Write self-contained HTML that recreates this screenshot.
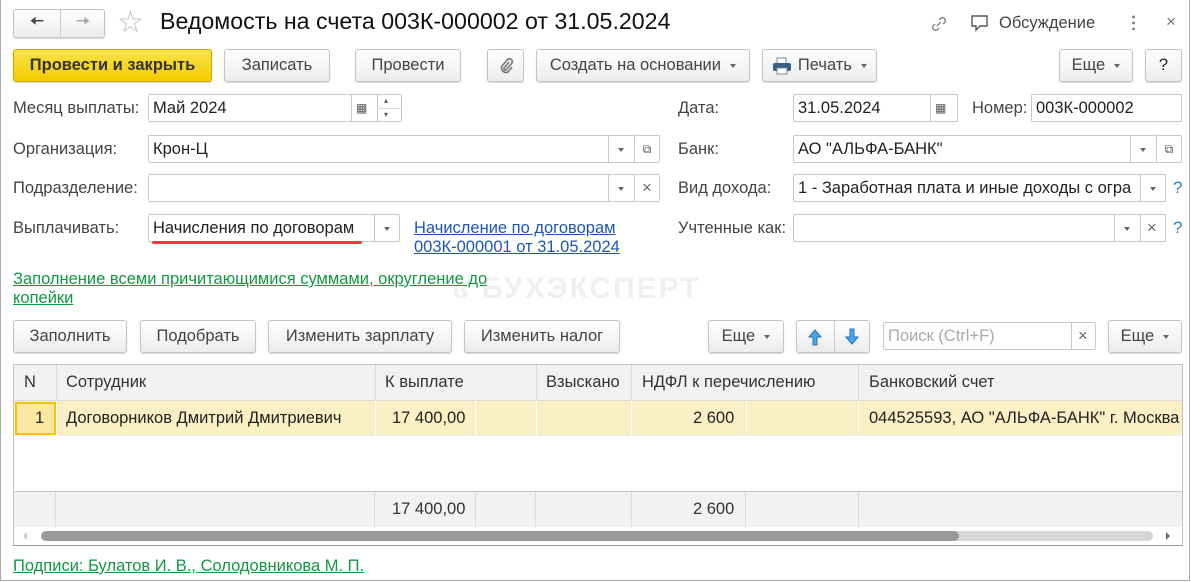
<!DOCTYPE html><html><head><meta charset="utf-8"><style>
*{box-sizing:border-box}body{margin:0;width:1191px;height:582px;background:#fff;font-family:"Liberation Sans",sans-serif;font-size:16.5px;color:#333;position:relative;overflow:hidden}
.a{position:absolute}
.win{left:0;top:0;width:1190px;height:581px;border:1px solid #aaa;border-top:none}
.btn{position:absolute;height:33px;border:1px solid #c4c4c4;border-radius:3px;background:linear-gradient(#fff,#ececec);box-shadow:0 1px 1px rgba(0,0,0,.15);display:flex;align-items:center;justify-content:center;color:#444;white-space:nowrap}
.inp{position:absolute;height:28px;border:1px solid #c8c8c8;border-radius:2px;background:#fff;padding-left:4px;line-height:27px;color:#222;white-space:nowrap;overflow:hidden}
.sep{position:absolute;top:0;bottom:0;border-left:1px solid #c8c8c8}
.lbl{position:absolute;color:#444}
.dd{position:absolute;width:0;height:0;border-left:3px solid transparent;border-right:3px solid transparent;border-top:4px solid #666}
.q{position:absolute;color:#2a7ec8;font-size:17px}
.lnk{position:absolute;color:#1d55b5;text-decoration:underline;z-index:2}
.g{color:#119940}
.col{position:absolute;top:0;bottom:0;border-left:1px solid #dadada}
</style></head><body>
<div class="a win"></div>
<div class="btn" style="left:13px;top:9px;width:92px;height:29px"><span style="position:absolute;left:0;width:46px;text-align:center;font-size:18px;color:#444">&#129060;</span><div style="position:absolute;left:46px;top:0;bottom:0;border-left:1px solid #ccc"></div><span style="position:absolute;left:46px;width:46px;text-align:center;font-size:18px;color:#aaa">&#129062;</span></div>
<div class="a" style="left:117px;top:5px;font-size:30px;color:#bbb">☆</div>
<div class="a" style="left:160px;top:8px;font-size:23.2px;color:#111">Ведомость на счета 003К-000002 от 31.05.2024</div>
<svg class="a" style="left:928px;top:13px" width="22" height="22" viewBox="0 0 22 22" fill="none" stroke="#888" stroke-width="1.5"><path d="M9 13l4-4M7 11l-2 2a3 3 0 004 4l2-2M15 11l2-2a3 3 0 00-4-4l-2 2"/></svg>
<svg class="a" style="left:970px;top:13px" width="20" height="20" viewBox="0 0 20 20" fill="none" stroke="#555" stroke-width="1.4"><path d="M2 3h15v10h-7l-4 4v-4H2z"/></svg>
<div class="a" style="left:999px;top:14px;color:#444">Обсуждение</div>
<div class="a" style="left:1132px;top:14px;width:3px;height:16px;background:radial-gradient(circle,#888 1.4px,transparent 1.6px) 0 0/3px 6px"></div>
<div class="a" style="left:1166px;top:12px;color:#777;font-size:17px">×</div>
<div class="btn" style="left:13px;top:49px;width:199px;background:linear-gradient(#fbe34a,#f2cc00);border-color:#c9a800;font-weight:bold;color:#333">Провести и закрыть</div>
<div class="btn" style="left:224px;top:49px;width:106px">Записать</div>
<div class="btn" style="left:355px;top:49px;width:106px">Провести</div>
<div class="btn" style="left:487px;top:49px;width:37px"><svg width="16" height="18" viewBox="0 0 16 18" fill="none" stroke="#777" stroke-width="1.6"><path d="M11 5l-5 6a1.5 1.5 0 002 2l6-7a3 3 0 00-4-4l-6 7a4.5 4.5 0 006 6l4-5"/></svg></div>
<div class="btn" style="left:536px;top:49px;width:214px">Создать на основании&nbsp;&nbsp;<span class="dd" style="position:relative;display:inline-block"></span></div>
<div class="btn" style="left:762px;top:49px;width:115px"><svg width="20" height="18" viewBox="0 0 20 18" style="margin-right:6px"><rect x="5" y="1" width="9" height="6" fill="#fff" stroke="#789"/><rect x="1" y="6" width="18" height="8" rx="2" fill="#3a5f85"/><rect x="5" y="11" width="10" height="6" fill="#fff" stroke="#789"/></svg>Печать&nbsp;&nbsp;<span class="dd" style="position:relative;display:inline-block"></span></div>
<div class="btn" style="left:1059px;top:49px;width:74px">Еще&nbsp;&nbsp;<span class="dd" style="position:relative;display:inline-block"></span></div>
<div class="btn" style="left:1145px;top:49px;width:37px;color:#222">?</div>
<div class="lbl" style="left:13px;top:99px">Месяц выплаты:</div>
<div class="inp" style="left:148px;top:94px;width:254px">Май 2024<div class="sep" style="left:202px"></div><div class="sep" style="left:228px"></div><span class="a" style="left:207px;top:0;font-size:12px;color:#555">▦</span><span class="a" style="left:235px;top:-8px;font-size:8px;color:#555">▴</span><span class="a" style="left:235px;top:6px;font-size:8px;color:#555">▾</span><div class="a" style="left:228px;right:0;top:13px;border-top:1px solid #ddd"></div></div>
<div class="lbl" style="left:13px;top:140px">Организация:</div>
<div class="inp" style="left:148px;top:135px;width:487px">Крон-Ц<div class="sep" style="left:459px"></div><div class="dd" style="left:469px;top:12px"></div></div>
<div class="inp" style="left:634px;top:135px;width:26px;text-align:center;padding:0;font-size:12px;color:#555">⧉</div>
<div class="lbl" style="left:13px;top:179px">Подразделение:</div>
<div class="inp" style="left:148px;top:174px;width:487px"><div class="sep" style="left:459px"></div><div class="dd" style="left:469px;top:12px"></div></div>
<div class="inp" style="left:634px;top:174px;width:26px;text-align:center;padding:0;color:#666">×</div>
<div class="lbl" style="left:13px;top:219px">Выплачивать:</div>
<div class="inp" style="left:148px;top:214px;width:252px">Начисления по договорам<div class="sep" style="left:225px;background:#fff;width:26px"></div><div class="dd" style="left:235px;top:12px"></div></div>
<div class="a" style="left:152px;top:241px;width:210px;height:3px;background:#f03a3a;border-radius:2px"></div>
<div class="lnk" style="left:414px;top:219px;line-height:19px">Начисление по договорам<br>003К-000001 от 31.05.2024</div>
<div class="a" style="left:452px;top:272px;font-size:30px;font-weight:bold;color:#f0f0f0;letter-spacing:2px;z-index:1">ɞ БУХЭКСПЕРТ</div>
<div class="lnk g" style="left:13px;top:270px;line-height:19px">Заполнение всеми причитающимися суммами, округление до<br>копейки</div>
<div class="lbl" style="left:678px;top:99px">Дата:</div>
<div class="inp" style="left:793px;top:94px;width:165px">31.05.2024<div class="sep" style="left:136px"></div><span class="a" style="left:141px;top:0;font-size:12px;color:#555">▦</span></div>
<div class="lbl" style="left:972px;top:99px">Номер:</div>
<div class="inp" style="left:1031px;top:94px;width:151px">003К-000002</div>
<div class="lbl" style="left:678px;top:140px">Банк:</div>
<div class="inp" style="left:793px;top:135px;width:364px">АО "АЛЬФА-БАНК"<div class="sep" style="left:336px"></div><div class="dd" style="left:346px;top:12px"></div></div>
<div class="inp" style="left:1156px;top:135px;width:26px;text-align:center;padding:0;font-size:12px;color:#555">⧉</div>
<div class="lbl" style="left:678px;top:179px">Вид дохода:</div>
<div class="inp" style="left:793px;top:174px;width:373px">1 - Заработная плата и иные доходы с огра<div class="sep" style="left:346px;background:#fff;width:26px"></div><div class="dd" style="left:356px;top:12px"></div></div>
<div class="q" style="left:1173px;top:178px">?</div>
<div class="lbl" style="left:678px;top:219px">Учтенные как:</div>
<div class="inp" style="left:793px;top:214px;width:373px"><div class="sep" style="left:320px"></div><div class="sep" style="left:346px"></div><div class="dd" style="left:330px;top:12px"></div><span class="a" style="left:353px;top:0;color:#666">×</span></div>
<div class="q" style="left:1173px;top:218px">?</div>
<div class="btn" style="left:13px;top:320px;width:114px">Заполнить</div>
<div class="btn" style="left:140px;top:320px;width:116px">Подобрать</div>
<div class="btn" style="left:268px;top:320px;width:184px">Изменить зарплату</div>
<div class="btn" style="left:464px;top:320px;width:156px">Изменить налог</div>
<div class="btn" style="left:708px;top:320px;width:76px">Еще&nbsp;&nbsp;<span class="dd" style="position:relative;display:inline-block"></span></div>
<div class="btn" style="left:796px;top:320px;width:74px"><svg style="position:absolute;left:11px;top:8px" width="14" height="17" viewBox="0 0 14 17"><path d="M7 1L1 8h4v8h4V8h4z" fill="#4aa8ea" stroke="#2a6fb0"/></svg><div style="position:absolute;left:37px;top:0;bottom:0;border-left:1px solid #ccc"></div><svg style="position:absolute;left:48px;top:7px" width="14" height="17" viewBox="0 0 14 17"><path d="M7 16L1 9h4V1h4v8h4z" fill="#4aa8ea" stroke="#2a6fb0"/></svg></div>
<div class="inp" style="left:883px;top:322px;width:213px;color:#aaa">Поиск (Ctrl+F)<div class="sep" style="left:187px"></div><span class="a" style="left:194px;top:0;color:#666">×</span></div>
<div class="btn" style="left:1108px;top:320px;width:74px">Еще&nbsp;&nbsp;<span class="dd" style="position:relative;display:inline-block"></span></div>
<div class="a" style="left:13px;top:364px;width:1170px;height:182px;border:1px solid #c0c0c0;border-bottom-color:#999"></div>
<div class="a" style="left:14px;top:365px;width:1168px;height:36px;background:#f2f2f2;border-bottom:1px solid #ddd">
<div class="col" style="left:42px"></div><div class="col" style="left:361px"></div><div class="col" style="left:522px"></div><div class="col" style="left:617px"></div><div class="col" style="left:844px"></div>
<span class="a" style="left:10px;top:8px">N</span><span class="a" style="left:52px;top:8px">Сотрудник</span><span class="a" style="left:371px;top:8px">К выплате</span><span class="a" style="left:532px;top:8px">Взыскано</span><span class="a" style="left:628px;top:8px">НДФЛ к перечислению</span><span class="a" style="left:855px;top:8px">Банковский счет</span></div>
<div class="a" style="left:14px;top:401px;width:1168px;height:35px;background:#fbf0c5;color:#222;border-bottom:1px solid #eee;white-space:nowrap;overflow:hidden">
<div class="a" style="left:1px;top:1px;width:41px;height:33px;border:2px solid #f5c400;background:#fce8a0"></div>
<div class="col" style="left:42px;border-color:#fff"></div><div class="col" style="left:361px;border-color:#fff"></div><div class="col" style="left:461px;border-color:#fff"></div><div class="col" style="left:522px;border-color:#fff"></div><div class="col" style="left:617px;border-color:#fff"></div><div class="col" style="left:732px;border-color:#fff"></div><div class="col" style="left:844px;border-color:#fff"></div>
<span class="a" style="left:21px;top:8px">1</span><span class="a" style="left:52px;top:8px">Договорников Дмитрий Дмитриевич</span><span class="a" style="left:378px;top:8px">17 400,00</span><span class="a" style="left:679px;top:8px">2 600</span><span class="a" style="left:855px;top:8px">044525593, АО "АЛЬФА-БАНК" г. Москва</span></div>
<div class="a" style="left:14px;top:491px;width:1168px;height:36px;background:#f2f2f2;border-top:1px solid #c8c8c8">
<div class="col" style="left:41px"></div><div class="col" style="left:360px"></div><div class="col" style="left:461px"></div><div class="col" style="left:521px"></div><div class="col" style="left:617px"></div><div class="col" style="left:731px"></div><div class="col" style="left:844px"></div>
<span class="a" style="left:378px;top:8px">17 400,00</span><span class="a" style="left:679px;top:8px">2 600</span></div>
<div class="a" style="left:41px;top:531px;width:1112px;height:10px;background:#d5d5d5;border-radius:5px"></div>
<div class="a" style="left:41px;top:531px;width:918px;height:10px;background:#9a9a9a;border-radius:5px"></div>
<div class="a" style="left:1166px;top:532px;border-top:4px solid transparent;border-bottom:4px solid transparent;border-left:4px solid #666"></div>
<div class="a" style="left:23px;top:532px;border-top:4px solid transparent;border-bottom:4px solid transparent;border-right:4px solid #ccc"></div>
<div class="lnk g" style="left:13px;top:557px">Подписи: Булатов И. В., Солодовникова М. П.</div>
</body></html>
